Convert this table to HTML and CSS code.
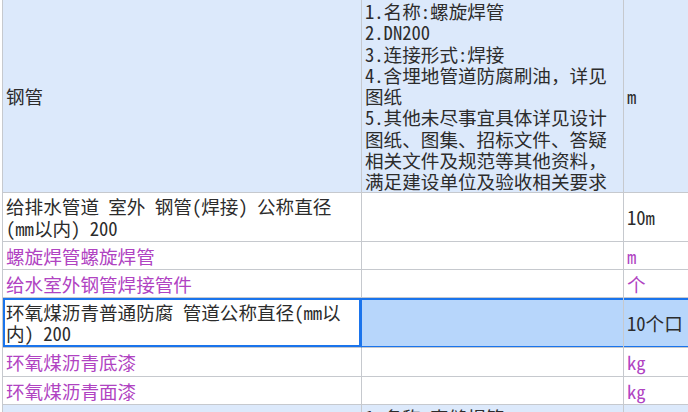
FILE: index.html
```html
<!DOCTYPE html>
<html lang="zh-CN">
<head>
<meta charset="utf-8">
<title>清单</title>
<link rel="stylesheet" href="styles.css">
</head>
<body>
<div class="sheet">
  <div class="row row-item">
    <div class="cell c1 mid">钢管</div>
    <div class="cell c2 desc">1.名称:螺旋焊管<br>2.DN200<br>3.连接形式:焊接<br>4.含埋地管道防腐刷油，详见<br>图纸<br>5.其他未尽事宜具体详见设计<br>图纸、图集、招标文件、答疑<br>相关文件及规范等其他资料，<br>满足建设单位及验收相关要求</div>
    <div class="cell c3 mid">m</div>
  </div>
  <div class="row row-two">
    <div class="cell c1 mid">给排水管道 室外 钢管(焊接) 公称直径<br>(mm以内) 200</div>
    <div class="cell c2"></div>
    <div class="cell c3 mid">10m</div>
  </div>
  <div class="row row-one sub">
    <div class="cell c1 mid">螺旋焊管螺旋焊管</div>
    <div class="cell c2"></div>
    <div class="cell c3 mid">m</div>
  </div>
  <div class="row row-one sub">
    <div class="cell c1 mid">给水室外钢管焊接管件</div>
    <div class="cell c2"></div>
    <div class="cell c3 mid">个</div>
  </div>
  <div class="row row-two selected">
    <div class="cell c1 mid active">环氧煤沥青普通防腐 管道公称直径(mm以<br>内) 200</div>
    <div class="cell c2"></div>
    <div class="cell c3 mid">10个口</div>
  </div>
  <div class="row row-one sub tall">
    <div class="cell c1 mid">环氧煤沥青底漆</div>
    <div class="cell c2"></div>
    <div class="cell c3 mid">kg</div>
  </div>
  <div class="row row-one sub">
    <div class="cell c1 mid">环氧煤沥青面漆</div>
    <div class="cell c2"></div>
    <div class="cell c3 mid">kg</div>
  </div>
  <div class="row row-item">
    <div class="cell c1 mid"></div>
    <div class="cell c2 desc">1.名称:直缝焊管<br>2.DN150</div>
    <div class="cell c3 mid"></div>
  </div>
</div>
</body>
</html>
```
FILE: styles.css
```css
html, body {
  margin: 0;
  padding: 0;
  background: #ffffff;
  overflow: hidden;
}

body {
  width: 688px;
  height: 412px;
  font-family: "Noto Sans Mono CJK SC", "Noto Sans CJK SC", monospace;
  font-size: 18.6px;
  line-height: 21.3px;
  color: #2c2c2c;
}

.sheet {
  margin: -1px 0 0 2px;
  width: 760px;
  border-left: 1px solid #c6c9ce;
}

.row {
  display: grid;
  grid-template-columns: 359px 262px 130px;
}

.cell {
  border-right: 1px solid #c6c9ce;
  border-bottom: 1px solid #c6c9ce;
  padding: 0 3px;
  white-space: nowrap;
  overflow: hidden;
}

.mid {
  display: flex;
  flex-direction: column;
  justify-content: center;
}

.row-item .cell {
  background: #dce9fb;
}

.row-item .desc {
  padding-top: 1px;
  padding-bottom: 0;
}

.row-two .cell {
  height: 48px;
}

.row-one .cell {
  height: 27px;
}

.row-one.tall .cell {
  height: 28px;
}

.sub .cell {
  color: #b043c2;
}

.selected .cell {
  background: #b7d6fb;
  box-shadow: inset 0 2px 0 #1a74ec, inset 0 -1px 0 #1a74ec;
  height: 49px;
}

.selected .cell.active {
  background: #ffffff;
  box-shadow: inset 0 0 0 2px #1a74ec;
  border-right-color: #1a74ec;
}
```
